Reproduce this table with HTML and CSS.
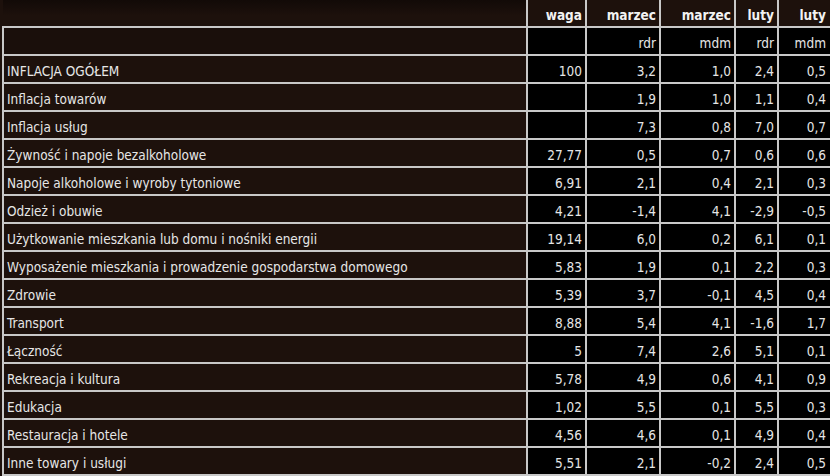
FILE: index.html
```html
<!DOCTYPE html>
<html lang="pl">
<head>
<meta charset="utf-8">
<link rel="stylesheet" href="styles.css">
</head>
<body>
<table class="cpi">
  <colgroup>
    <col class="c-label"><col class="c-waga"><col class="c-m1"><col class="c-m2"><col class="c-l1"><col class="c-l2">
  </colgroup>
  <thead>
    <tr class="head1">
      <th class="corner"></th><th>waga</th><th>marzec</th><th>marzec</th><th>luty</th><th>luty</th>
    </tr>
    <tr class="head2">
      <td class="label"></td><td></td><td>rdr</td><td>mdm</td><td>rdr</td><td>mdm</td>
    </tr>
  </thead>
  <tbody>
    <tr><td class="label">INFLACJA OGÓŁEM</td><td>100</td><td>3,2</td><td>1,0</td><td>2,4</td><td>0,5</td></tr>
    <tr><td class="label">Inflacja towarów</td><td></td><td>1,9</td><td>1,0</td><td>1,1</td><td>0,4</td></tr>
    <tr><td class="label">Inflacja usług</td><td></td><td>7,3</td><td>0,8</td><td>7,0</td><td>0,7</td></tr>
    <tr><td class="label">Żywność i napoje bezalkoholowe</td><td>27,77</td><td>0,5</td><td>0,7</td><td>0,6</td><td>0,6</td></tr>
    <tr><td class="label">Napoje alkoholowe i wyroby tytoniowe</td><td>6,91</td><td>2,1</td><td>0,4</td><td>2,1</td><td>0,3</td></tr>
    <tr><td class="label">Odzież i obuwie</td><td>4,21</td><td>-1,4</td><td>4,1</td><td>-2,9</td><td>-0,5</td></tr>
    <tr><td class="label">Użytkowanie mieszkania lub domu i nośniki energii</td><td>19,14</td><td>6,0</td><td>0,2</td><td>6,1</td><td>0,1</td></tr>
    <tr><td class="label">Wyposażenie mieszkania i prowadzenie gospodarstwa domowego</td><td>5,83</td><td>1,9</td><td>0,1</td><td>2,2</td><td>0,3</td></tr>
    <tr><td class="label">Zdrowie</td><td>5,39</td><td>3,7</td><td>-0,1</td><td>4,5</td><td>0,4</td></tr>
    <tr><td class="label">Transport</td><td>8,88</td><td>5,4</td><td>4,1</td><td>-1,6</td><td>1,7</td></tr>
    <tr><td class="label">Łączność</td><td>5</td><td>7,4</td><td>2,6</td><td>5,1</td><td>0,1</td></tr>
    <tr><td class="label">Rekreacja i kultura</td><td>5,78</td><td>4,9</td><td>0,6</td><td>4,1</td><td>0,9</td></tr>
    <tr><td class="label">Edukacja</td><td>1,02</td><td>5,5</td><td>0,1</td><td>5,5</td><td>0,3</td></tr>
    <tr><td class="label">Restauracja i hotele</td><td>4,56</td><td>4,6</td><td>0,1</td><td>4,9</td><td>0,4</td></tr>
    <tr><td class="label">Inne towary i usługi</td><td>5,51</td><td>2,1</td><td>-0,2</td><td>2,4</td><td>0,5</td></tr>
  </tbody>
</table>
</body>
</html>
```

FILE: styles.css
```css
html, body {
  margin: 0;
  padding: 0;
  background: #1d110c;
  overflow: hidden;
}

body {
  padding-left: 2px;
  font-family: "DejaVu Sans Condensed", "DejaVu Sans", sans-serif;
  font-size: 13.5px;
  color: #e6e6e6;
}

.cpi {
  border-collapse: collapse;
  table-layout: fixed;
  width: 834px;
}

.c-label { width: 524px; }
.c-waga { width: 59px; }
.c-m1 { width: 74px; }
.c-m2 { width: 75px; }
.c-l1 { width: 43px; }
.c-l2 { width: 59px; }

.cpi th,
.cpi td {
  height: 23px;
  padding: 3px 3px 0;
  border: 2px solid #c8c8c8;
  background: #000;
  text-align: right;
  white-space: nowrap;
  overflow: hidden;
  vertical-align: middle;
}

.cpi th:last-child,
.cpi td:last-child {
  padding-right: 10px;
}

.cpi th {
  background: #1d110c;
  font-weight: bold;
  color: #f2f2f2;
  border-top: none;
}

.cpi th.corner {
  border-left: none;
  background: linear-gradient(#120a07, #1d110c 60%);
}

.cpi td.label {
  background: #1d110c;
  text-align: left;
}

.head2 td.label {
  background: #1a0f0b;
}
```
